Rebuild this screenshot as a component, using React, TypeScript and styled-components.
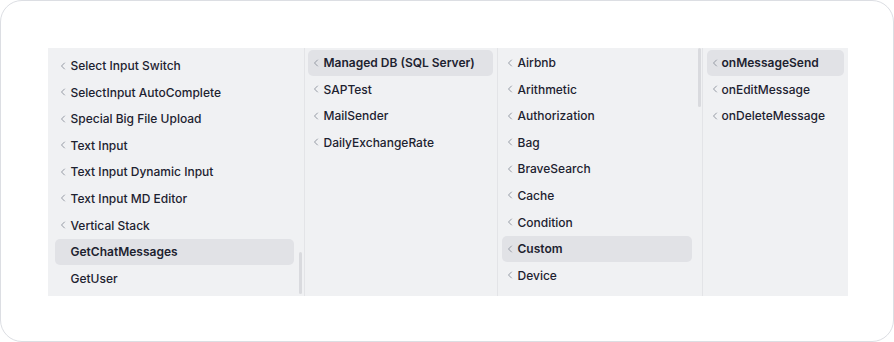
import React from 'react';
import styled, { createGlobalStyle } from 'styled-components';
import { ChevronLeft } from 'lucide-react';

const GlobalStyle = createGlobalStyle`
  html, body {
    margin: 0;
    padding: 0;
    background: #ffffff;
  }
  body {
    font-family: Inter, "Liberation Sans", sans-serif;
    -webkit-font-smoothing: antialiased;
  }
`;

const Frame = styled.div`
  box-sizing: border-box;
  width: 894px;
  height: 342px;
  padding: 46px;
  border: 1.5px solid #dcdee3;
  border-radius: 22px;
  background: #ffffff;
`;

const Browser = styled.div`
  display: grid;
  grid-template-columns: 257px 193px 205px 145px;
  height: 248px;
  width: 800px;
  margin: 0.5px 0 0 0.5px;
  background: #f0f1f3;
  overflow: hidden;
`;

const Column = styled.div<{ $padTop: number; $padLeft: number; $last?: boolean }>`
  position: relative;
  display: flex;
  flex-direction: column;
  gap: 0.6px;
  padding: ${(p) => p.$padTop}px 4px 0 ${(p) => p.$padLeft}px;
  border-right: ${(p) => (p.$last ? 'none' : '1px solid #e3e4e7')};
  overflow: hidden;
  box-sizing: border-box;
`;

const Row = styled.div<{ $active?: boolean; $right: number }>`
  display: flex;
  align-items: center;
  flex-shrink: 0;
  height: 26px;
  padding-left: 2px;
  margin-right: ${(p) => p.$right}px;
  border-radius: 5px;
  background: ${(p) => (p.$active ? '#e1e2e6' : 'transparent')};
  color: #1d2230;
  font-size: 12px;
  font-weight: ${(p) => (p.$active ? 600 : 500)};
  white-space: nowrap;
`;

const Chevron = styled.span`
  display: flex;
  width: 12px;
  height: 12px;
  color: #959aa4;
  flex-shrink: 0;
`;

const Label = styled.span<{ $indent: number }>`
  margin-left: ${(p) => p.$indent}px;
`;

const Thumb = styled.div<{ $top: number; $height: number; $right: number }>`
  position: absolute;
  right: ${(p) => p.$right}px;
  top: ${(p) => p.$top}px;
  width: 3px;
  height: ${(p) => p.$height}px;
  border-radius: 2px;
  background: #d9dade;
`;

type Item = { label: string; chevron?: boolean; active?: boolean };

const col1: Item[] = [
  { label: 'Select Input Switch', chevron: true },
  { label: 'SelectInput AutoComplete', chevron: true },
  { label: 'Special Big File Upload', chevron: true },
  { label: 'Text Input', chevron: true },
  { label: 'Text Input Dynamic Input', chevron: true },
  { label: 'Text Input MD Editor', chevron: true },
  { label: 'Vertical Stack', chevron: true },
  { label: 'GetChatMessages', active: true },
  { label: 'GetUser' },
];

const col2: Item[] = [
  { label: 'Managed DB (SQL Server)', chevron: true, active: true },
  { label: 'SAPTest', chevron: true },
  { label: 'MailSender', chevron: true },
  { label: 'DailyExchangeRate', chevron: true },
];

const col3: Item[] = [
  { label: 'Airbnb', chevron: true },
  { label: 'Arithmetic', chevron: true },
  { label: 'Authorization', chevron: true },
  { label: 'Bag', chevron: true },
  { label: 'BraveSearch', chevron: true },
  { label: 'Cache', chevron: true },
  { label: 'Condition', chevron: true },
  { label: 'Custom', chevron: true, active: true },
  { label: 'Device', chevron: true },
];

const col4: Item[] = [
  { label: 'onMessageSend', chevron: true, active: true },
  { label: 'onEditMessage', chevron: true },
  { label: 'onDeleteMessage', chevron: true },
];

const renderRows = (items: Item[], right: number, indent: number) =>
  items.map((item) => (
    <Row key={item.label} $active={item.active} $right={right}>
      <Chevron>{item.chevron && <ChevronLeft size={12} strokeWidth={2} />}</Chevron>
      <Label $indent={indent}>{item.label}</Label>
    </Row>
  ));

const App: React.FC = () => {
  return (
    <>
      <GlobalStyle />
      <Frame>
        <Browser>
          <Column $padTop={5} $padLeft={7}>
            {renderRows(col1, 6, 2)}
            <Thumb $top={204} $height={42} $right={2} />
          </Column>
          <Column $padTop={2} $padLeft={3}>
            {renderRows(col2, 0, 2)}
          </Column>
          <Column $padTop={2} $padLeft={4}>
            {renderRows(col3, 6, 2)}
            <Thumb $top={0} $height={59} $right={1} />
          </Column>
          <Column $padTop={2} $padLeft={4} $last>
            {renderRows(col4, 0, 1)}
          </Column>
        </Browser>
      </Frame>
    </>
  );
};

export default App;
